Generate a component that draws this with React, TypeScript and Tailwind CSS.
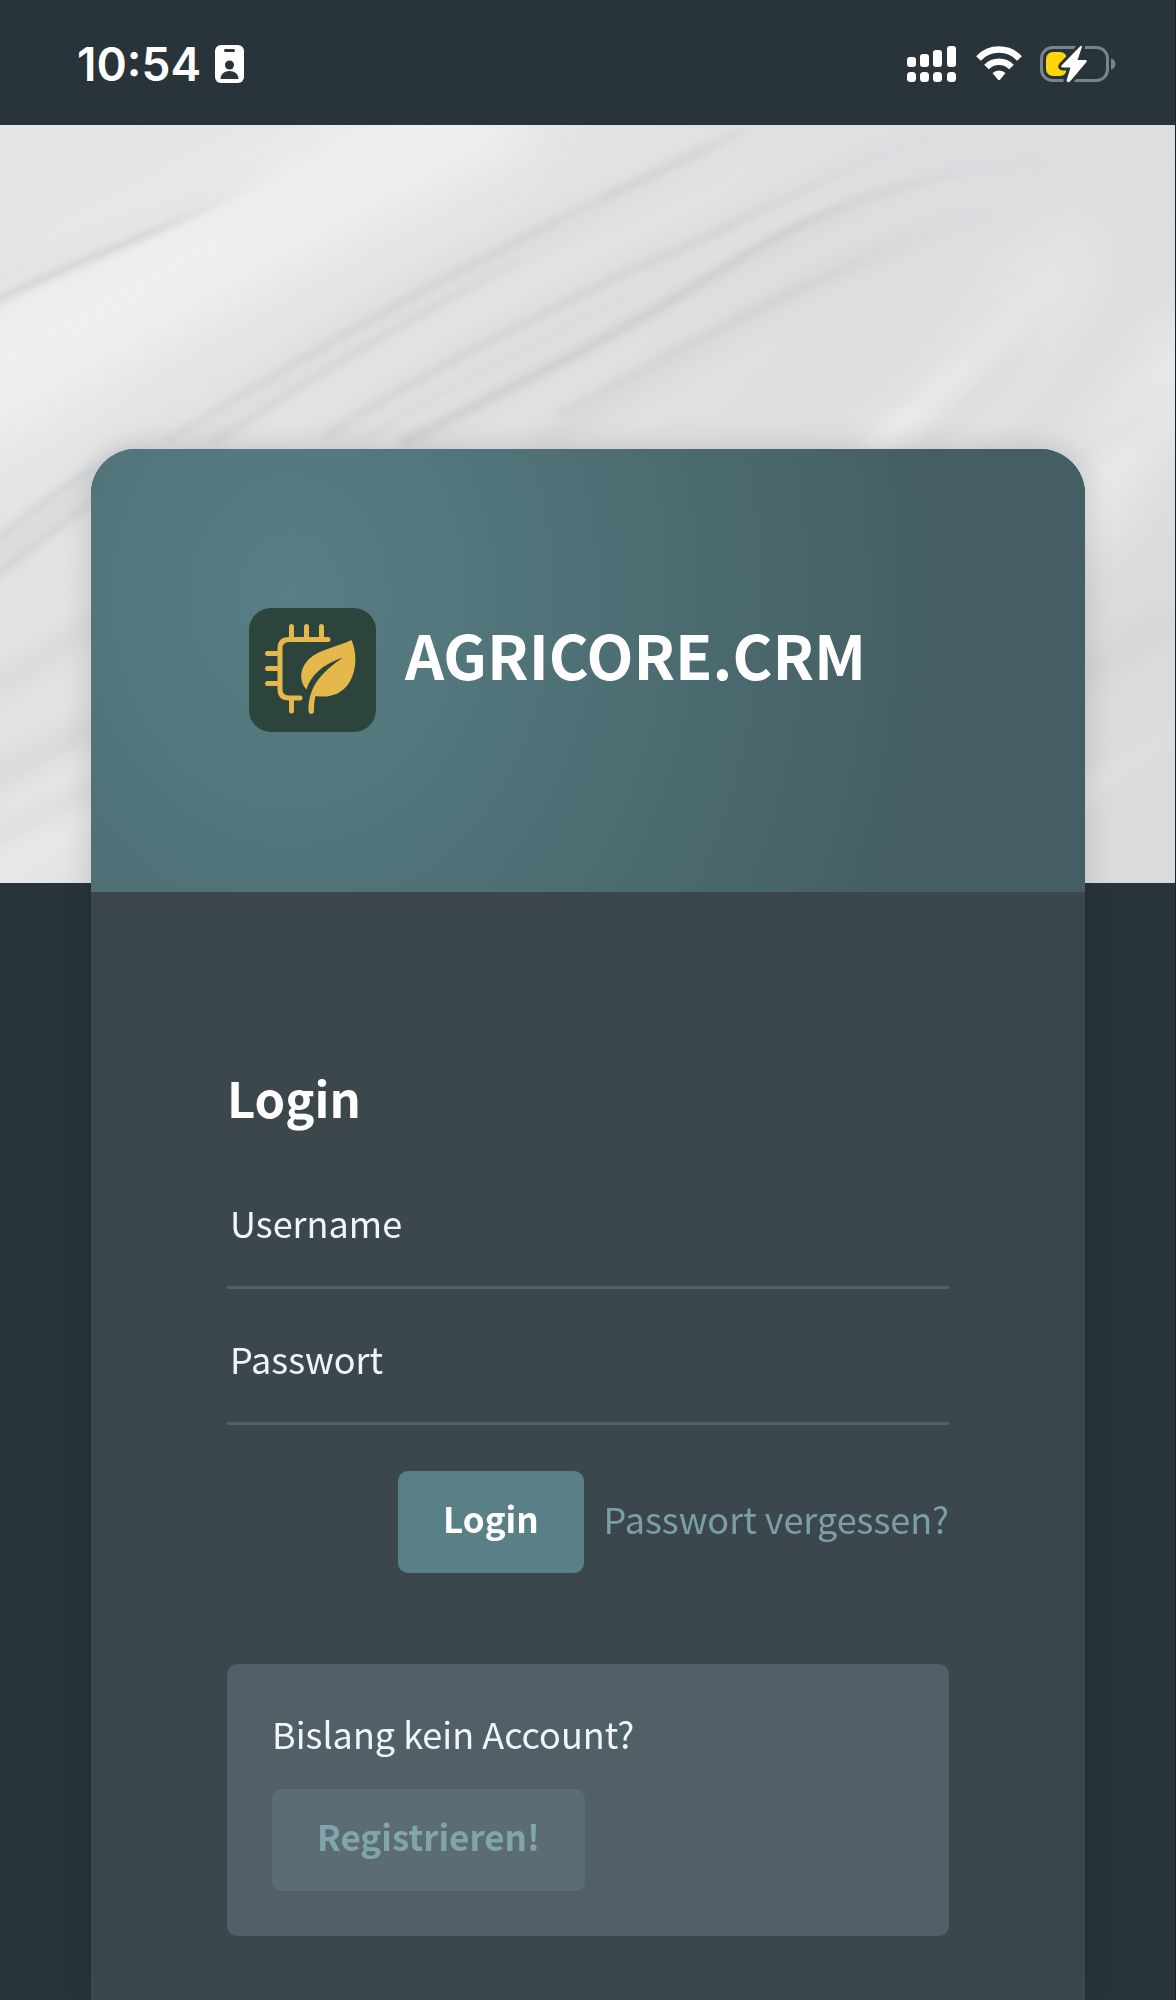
import { InputHTMLAttributes } from "react";

function BadgeIcon() {
  return (
    <svg width="29" height="38" viewBox="0 0 29 38" aria-hidden>
      <rect width="29" height="38" rx="6" fill="#fff" />
      <rect x="9" y="4" width="11" height="3" rx="1.5" fill="#28343a" />
      <circle cx="14.5" cy="20" r="4.5" fill="#28343a" />
      <path d="M5.5 34c0-5 4-8 9-8s9 3 9 8z" fill="#28343a" />
    </svg>
  );
}

function SignalIcon() {
  const bars = [
    { x: 0, y: 11, h: 10 },
    { x: 13, y: 8, h: 13 },
    { x: 26, y: 4, h: 17 },
    { x: 40, y: 0, h: 21 },
  ];
  return (
    <svg width="49" height="36" viewBox="0 0 49 36" fill="#fff" aria-hidden>
      {bars.map((b) => (
        <g key={b.x}>
          <rect x={b.x} y={b.y} width="9" height={b.h} rx="3" />
          <rect x={b.x} y="26" width="9" height="10" rx="3.5" />
        </g>
      ))}
    </svg>
  );
}

function WifiIcon() {
  return (
    <svg width="46" height="36" viewBox="0 0 46 36" aria-hidden>
      <path d="M2.500 12.500a28 28 0 0 1 41 0" fill="none" stroke="#fff" strokeWidth="6.500" />
      <path d="M10.500 21a17.500 17.500 0 0 1 25 0" fill="none" stroke="#fff" strokeWidth="6.500" />
      <path d="M16.500 27a9.500 9.500 0 0 1 13 0l-5.300 6.500a1.500 1.500 0 0 1-2.400 0z" fill="#fff" />
    </svg>
  );
}

function BatteryIcon() {
  return (
    <svg width="76" height="38" viewBox="0 0 76 38" aria-hidden>
      <rect x="1.5" y="2.5" width="66" height="33" rx="11" fill="none" stroke="#7b8488" strokeWidth="3" />
      <path d="M71 13.500c3 .8 4.500 3 4.500 5.500s-1.500 4.700-4.500 5.500z" fill="#7b8488" />
      <rect x="6" y="7" width="21" height="24" rx="7" fill="#ffd60a" />
      <path
        d="M40.500 1 L21.500 20.500 Q20.500 22.500 23 22.500 H30.500 L26.500 35.500 Q27.500 38.500 30 36.500 L46.500 17 Q47.500 15 45 15 H37.500 L42 2 Q41.500 0 40.500 1z"
        fill="#fff"
        stroke="#28343a"
        strokeWidth="6"
        strokeLinejoin="round"
        paintOrder="stroke"
      />
    </svg>
  );
}

function StatusBar() {
  return (
    <header className="flex h-[125px] items-center justify-between pt-[2px] pr-[59px] pl-[77px]">
      <div className="flex items-center gap-[14px]">
        <time className="font-[Inter,sans-serif] text-[46px] leading-[54px] font-semibold text-white">10:54</time>
        <BadgeIcon />
      </div>
      <div className="flex items-center">
        <SignalIcon />
        <span className="ml-5">
          <WifiIcon />
        </span>
        <span className="ml-[18px]">
          <BatteryIcon />
        </span>
      </div>
    </header>
  );
}

// Soft diagonal folds behind the card
function MarbleBackdrop() {
  return (
    <svg
      className="col-start-1 row-start-1 h-[758px] w-full"
      viewBox="0 0 1176 758"
      preserveAspectRatio="none"
      fill="none"
      aria-hidden
    >
      <defs>
        <linearGradient id="base" x1="0" y1="0" x2="1" y2="0.6">
          <stop offset="0" stopColor="#e5e6e8" />
          <stop offset="0.5" stopColor="#e0e1e3" />
          <stop offset="1" stopColor="#dadbdd" />
        </linearGradient>
        <linearGradient id="fold">
          <stop offset="0" stopColor="#c6c7c9" stopOpacity="0.6" />
          <stop offset="0.6" stopColor="#c8c9cb" stopOpacity="0.7" />
          <stop offset="1" stopColor="#d2d3d5" stopOpacity="0" />
        </linearGradient>
        <linearGradient id="shine">
          <stop offset="0" stopColor="#eeeff1" stopOpacity="0.9" />
          <stop offset="1" stopColor="#eeeff1" stopOpacity="0" />
        </linearGradient>
        <filter id="wide" x="-30%" y="-30%" width="160%" height="160%">
          <feGaussianBlur stdDeviation="32" />
        </filter>
        <filter id="mid" x="-30%" y="-30%" width="160%" height="160%">
          <feGaussianBlur stdDeviation="9" />
        </filter>
        <filter id="fine" x="-30%" y="-30%" width="160%" height="160%">
          <feGaussianBlur stdDeviation="3" />
        </filter>
      </defs>
      <rect width="1176" height="758" fill="url(#base)" />
      <g filter="url(#wide)">
        <path d="M-80 290C80 200 240 100 520 -40" stroke="#eff0f2" strokeWidth="120" />
        <path d="M820 400C950 300 1030 220 1080 110" stroke="#e6e7e9" strokeWidth="60" />
        <path d="M1060 420C1110 340 1160 260 1220 200" stroke="#ecedef" strokeWidth="60" />
        <path d="M-60 780C0 740 60 690 130 650" stroke="#ececee" strokeWidth="50" />
        <path d="M-40 400C20 370 60 350 130 300" stroke="#e4e5e7" strokeWidth="60" />
      </g>
      <g filter="url(#mid)">
        <path d="M-40 176C100 110 200 80 360 -6" stroke="url(#fold)" strokeWidth="12" opacity="0.4" />
        <path d="M190 325C325 215 440 155 600 82S700 30 780 -10" stroke="url(#fold)" strokeWidth="22" opacity="0.3" />
        <path d="M325 320C450 220 600 160 700 115S860 20 980 0" stroke="url(#fold)" strokeWidth="16" opacity="0.3" />
        <path d="M402 325C560 230 710 152 844 90S960 36 1080 45" stroke="url(#fold)" strokeWidth="18" opacity="0.4" />
        <path d="M540 320C640 250 767 175 882 125S960 95 1060 90" stroke="url(#fold)" strokeWidth="26" opacity="0.4" />
        <path d="M870 325C960 250 1010 200 1054 135" stroke="url(#shine)" strokeWidth="20" />
        <path d="M920 325C978 275 1020 240 1060 180" stroke="url(#fold)" strokeWidth="16" opacity="0.5" />
        <path d="M1060 350C1110 310 1150 290 1200 250" stroke="url(#fold)" strokeWidth="14" opacity="0.3" />
        <path d="M-20 450C40 400 80 360 190 300" stroke="url(#fold)" strokeWidth="22" opacity="0.5" />
        <path d="M-20 570C20 550 60 520 140 470" stroke="url(#fold)" strokeWidth="20" opacity="0.5" />
        <path d="M-20 660C20 640 60 620 140 580" stroke="url(#fold)" strokeWidth="20" opacity="0.6" />
        <path d="M-20 720C20 700 60 680 140 640" stroke="url(#fold)" strokeWidth="12" opacity="0.7" />
        <path d="M1070 560C1110 530 1150 510 1220 470" stroke="url(#fold)" strokeWidth="20" opacity="0.4" />
        <path d="M1070 680C1110 650 1150 620 1220 580" stroke="url(#shine)" strokeWidth="20" opacity="0.5" />
      </g>
      <g filter="url(#fine)" stroke="url(#fold)">
        <path d="M-20 184C60 142 120 124 260 58" strokeWidth="8" opacity="0.9" />
        <path d="M165 318C268 252 421 162 600 75L800 -20" strokeWidth="6" opacity="0.7" />
        <path d="M214 318C325 242 440 175 580 106" strokeWidth="6" opacity="0.7" />
        <path d="M600 75L768 -6" strokeWidth="8" opacity="0.6" />
        <path d="M325 312C421 248 600 158 672 128S844 38 980 -4" strokeWidth="6" opacity="0.7" />
        <path d="M360 318C460 252 610 180 690 138" strokeWidth="6" opacity="0.4" />
        <path d="M402 318C478 278 600 222 710 152S900 50 1060 34" strokeWidth="8" opacity="0.9" />
        <path d="M560 290C672 232 767 170 959 98" strokeWidth="8" opacity="0.5" />
        <path d="M-10 420C30 390 60 360 150 310" strokeWidth="6" opacity="0.8" />
        <path d="M-10 455C30 425 60 395 150 340" strokeWidth="6" opacity="0.8" />
      </g>
    </svg>
  );
}

function Logo() {
  return (
    <svg className="shrink-0" width="127" height="124" viewBox="0 0 127 124" aria-hidden>
      <rect width="127" height="124" rx="22" fill="#2c443b" />
      <g fill="none" stroke="#e4b84a" strokeWidth="5" strokeLinecap="round">
        <path d="M79 31.500H40q-9 0-9 9V81q0 9 9 9h11" />
        <path d="M42.500 30V18.500M57.500 30V18.500M72.500 30V18.500M42.500 91v12" />
        <path d="M29 45.500H18.500M29 60.500H18.500M29 75.500H18.500" />
      </g>
      <path
        d="M102.500 32C108 45 108 62 100 75C92 87 80 90 66.500 88C65 94 65 98 65 103C65 107 59.500 107 59.500 103C59.500 80 70 66 94 49.500C74 56 62 67 57.500 81.500C50 74 50 61 60 51C71 41 88 39 102.500 32Z"
        fill="#e4b84a"
      />
    </svg>
  );
}

interface FieldProps extends InputHTMLAttributes<HTMLInputElement> {
  id: string;
  label: string;
}

// The label sits inside the field and hides once something is typed
function Field({ id, label, ...rest }: FieldProps) {
  return (
    <div className="grid border-b-[3px] border-[#515f66] leading-[52px] text-[#eff5fb]">
      <input
        id={id}
        name={id}
        placeholder=" "
        className="peer col-start-1 row-start-1 w-full bg-transparent px-[3px] pt-[43px] pb-[38px] outline-none"
        {...rest}
      />
      <label
        htmlFor={id}
        className="invisible col-start-1 row-start-1 px-[3px] pt-[43px] pb-[38px] peer-placeholder-shown:visible"
      >
        {label}
      </label>
    </div>
  );
}

export default function App() {
  return (
    <div className="flex min-h-screen flex-col border-r border-[#1b2428] bg-[#28343a] font-['Noto_Sans_CJK_JP','Noto_Sans_CJK_SC',sans-serif] text-[36px]">
      <StatusBar />
      <div className="grid flex-1 grid-cols-[minmax(0,1fr)]">
        <MarbleBackdrop />
        <main className="z-10 col-start-1 row-start-1 mt-[324px] mr-[90px] ml-[91px] flex flex-col overflow-hidden rounded-t-[45px] bg-[#3b474d] shadow-[0_0_30px_rgba(0,0,0,0.15)]">
          <div className="flex h-[443px] items-start gap-[29px] bg-[radial-gradient(660px_800px_at_20%_33%,#577f85,#445e63)] pt-[159px] pl-[158px]">
            <Logo />
            <h1 className="mt-[11px] text-[61px] leading-[70px] font-bold text-white">AGRICORE.CRM</h1>
          </div>

          <div className="flex flex-col px-[136px] pt-[175px] pb-16">
            <form onSubmit={(e) => e.preventDefault()}>
              <h2 className="mb-[26px] text-[49px] leading-[60px] font-bold text-white">Login</h2>
              <Field id="username" label="Username" type="text" autoComplete="username" />
              <Field id="password" label="Passwort" type="password" autoComplete="current-password" />
              <div className="mt-[46px] flex items-start justify-end gap-5">
                <button
                  type="submit"
                  className="rounded-[10px] bg-[#5a8087] px-[45px] pt-[21px] pb-[29px] text-[35px] leading-[52px] font-bold text-white"
                >
                  Login
                </button>
                <a href="#reset" className="pt-[21px] leading-[52px] text-[#7a9fa6]">
                  Passwort vergessen?
                </a>
              </div>
            </form>

            <section className="mt-[91px] flex flex-col items-start gap-8 rounded-[10px] bg-[#515f66] p-[45px]">
              <p className="leading-[48px] text-[#eff5fb]">Bislang kein Account?</p>
              <button
                type="button"
                className="rounded-[10px] bg-[#5b6d72] px-[45px] pt-[21px] pb-[29px] text-[35px] leading-[52px] font-bold text-[#80a5ac]"
              >
                Registrieren!
              </button>
            </section>
          </div>
        </main>
      </div>
    </div>
  );
}
